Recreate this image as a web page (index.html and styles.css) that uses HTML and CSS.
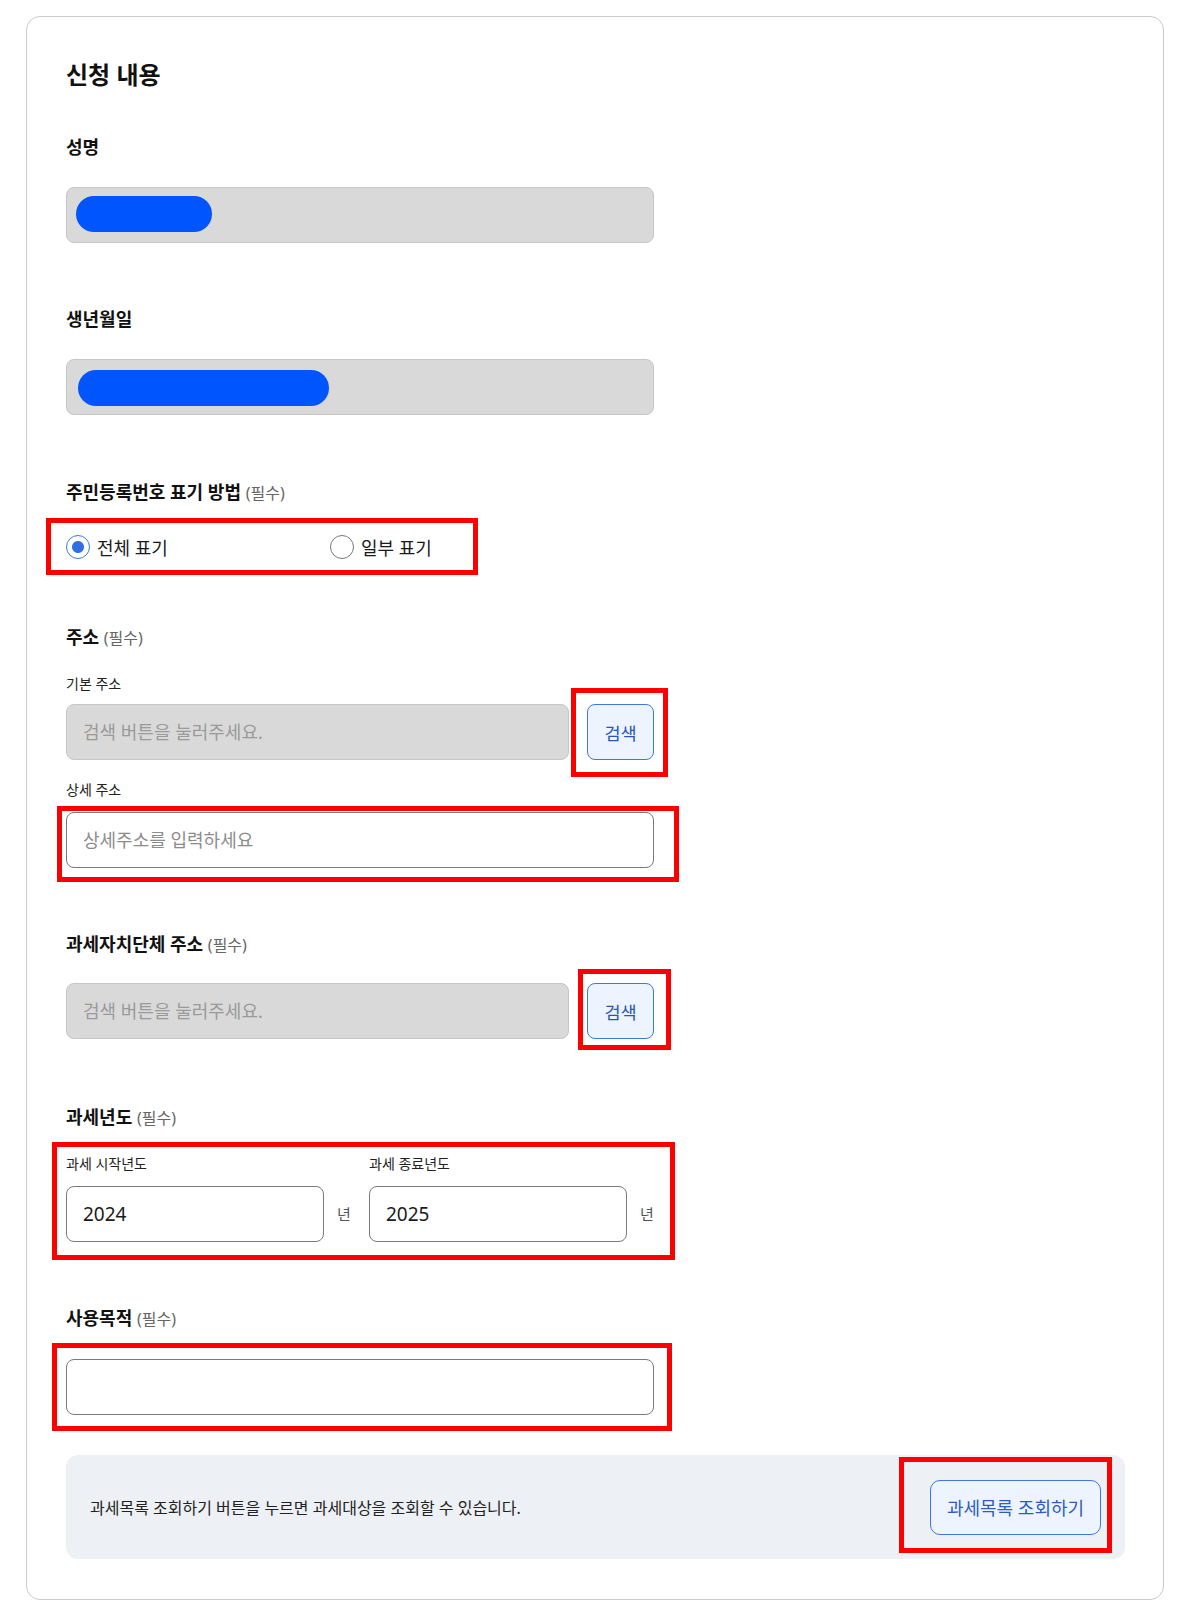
FILE: index.html
```html
<!DOCTYPE html>
<html lang="ko">
<head>
    <meta http-equiv="Content-Type" content="text/html; charset=UTF-8">
    <meta name="viewport" content="width=device-width, initial-scale=1.0">
    <title>신청 내용</title>
    <link rel="stylesheet" href="styles.css">
</head>
<body>
    <div class="card">
        <h2 class="title">신청 내용</h2>

        <div class="label first">성명</div>
        <div class="field locked"><span class="mask mask-name"></span></div>

        <div class="label">생년월일</div>
        <div class="field locked"><span class="mask mask-birth"></span></div>

        <div class="label rrn">주민등록번호 표기 방법 <span class="req">(필수)</span></div>
        <div class="radios marked mark-radio">
            <label class="option"><input type="radio" name="show" checked> 전체 표기</label>
            <label class="option"><input type="radio" name="show"> 일부 표기</label>
        </div>

        <div class="label addr">주소 <span class="req">(필수)</span></div>
        <div class="sublabel">기본 주소</div>
        <div class="search-row">
            <input class="field locked" type="text" placeholder="검색 버튼을 눌러주세요." readonly>
            <button class="btn-search marked mark-s1">검색</button>
        </div>
        <div class="sublabel detail">상세 주소</div>
        <div class="marked mark-detail">
            <input class="field detail-input" type="text" placeholder="상세주소를 입력하세요">
        </div>

        <div class="label">과세자치단체 주소 <span class="req">(필수)</span></div>
        <div class="search-row gov">
            <input class="field locked" type="text" placeholder="검색 버튼을 눌러주세요." readonly>
            <button class="btn-search marked mark-s2">검색</button>
        </div>

        <div class="label year-label">과세년도 <span class="req">(필수)</span></div>
        <div class="years marked mark-years">
            <div class="year-col">
                <div class="sublabel">과세 시작년도</div>
                <div class="year-row">
                    <input class="field year" type="text" value="2024">
                    <span class="unit">년</span>
                </div>
            </div>
            <div class="year-col">
                <div class="sublabel">과세 종료년도</div>
                <div class="year-row">
                    <input class="field year" type="text" value="2025">
                    <span class="unit">년</span>
                </div>
            </div>
        </div>

        <div class="label">사용목적 <span class="req">(필수)</span></div>
        <div class="marked mark-purpose purpose">
            <input class="field" type="text">
        </div>

        <div class="notice">
            <p>과세목록 조회하기 버튼을 누르면 과세대상을 조회할 수 있습니다.</p>
            <button class="btn-list marked mark-list">과세목록 조회하기</button>
        </div>
    </div>
</body>
</html>
```

FILE: styles.css
```css
* {
    box-sizing: border-box;
}

body {
    margin: 0;
    background-color: #ffffff;
    font-family: "Noto Sans", "Noto Sans CJK KR", sans-serif;
    color: #1a1a1a;
}

.card {
    width: 1138px;
    margin: 16px 0 10px 26px;
    padding: 43px 38px 40px 39px;
    border: 1px solid #cacaca;
    border-radius: 14px;
}

.title {
    margin: 0;
    font-size: 24px;
    line-height: 30px;
    font-weight: 700;
    color: #111;
}

.label {
    height: 24px;
    margin-top: 64px;
    font-size: 18px;
    line-height: 24px;
    font-weight: 700;
    color: #111;
}

.label.first {
    margin-top: 45px;
}

.label.rrn {
    margin-top: 65px;
}

.label.addr {
    margin-top: 55px;
}

.label.year-label {
    margin-top: 66px;
}

.req {
    font-size: 16px;
    line-height: 1;
    font-weight: 400;
    color: #666;
}

.sublabel {
    height: 20px;
    margin-top: 25px;
    font-size: 14px;
    line-height: 20px;
    color: #222;
}

.sublabel.detail {
    margin-top: 20px;
}

.field {
    display: block;
    width: 588px;
    height: 56px;
    margin-top: 28px;
    padding: 0 16px;
    border: 1px solid #7a7a7a;
    border-radius: 8px;
    background-color: #fff;
    font-family: "Noto Sans", "Noto Sans CJK KR", sans-serif;
    font-size: 18px;
    color: #222;
    outline: none;
}

.field::placeholder {
    color: #8c8c8c;
}

.field.locked {
    background-color: #d9d9d9;
    border-color: #c6c6c6;
    position: relative;
}

.field.locked::placeholder {
    color: #9a9a9a;
}

.mask {
    position: absolute;
    top: 8px;
    height: 36px;
    border-radius: 18px;
    background-color: #0055ff;
}

.mask-name {
    left: 9px;
    width: 136px;
}

.mask-birth {
    left: 11px;
    top: 10px;
    width: 251px;
}

/* red annotation frames */
.marked {
    position: relative;
}

.marked::after {
    content: "";
    position: absolute;
    border: 5px solid #ff0000;
    pointer-events: none;
}

.mark-radio::after { top: -5px; left: -20px; right: 0; bottom: -5px; }
.mark-s1::after { top: -17px; left: -17px; right: -15px; bottom: -18px; }
.mark-detail::after { top: -6px; left: -9px; right: -25px; bottom: -14px; }
.mark-s2::after { top: -15px; left: -10px; right: -18px; bottom: -12px; }
.mark-years::after { top: -12px; left: -14px; right: -3px; bottom: -18px; }
.mark-purpose::after { top: -16px; left: -14px; right: -18px; bottom: -16px; }
.mark-list::after { top: -24px; left: -32px; right: -12px; bottom: -19px; }

.radios {
    display: flex;
    align-items: center;
    width: 412px;
    height: 47px;
    margin-top: 19px;
}

.option {
    flex: none;
    display: flex;
    align-items: center;
    gap: 7px;
    width: 264px;
    font-size: 18px;
    color: #1a1a1a;
}

.option input {
    appearance: none;
    width: 24px;
    height: 24px;
    margin: 0;
    border: 1.5px solid #777;
    border-radius: 50%;
    background-color: #fff;
}

.option input:checked {
    border-color: #3a78e6;
    background: radial-gradient(circle, #2f6fe4 0 5.5px, #fff 6.5px);
}

.search-row {
    display: flex;
    gap: 18px;
    margin-top: 10px;
}

.search-row.gov {
    margin-top: 27px;
}

.search-row .field {
    width: 503px;
    margin-top: 0;
}

.btn-search {
    flex: none;
    width: 67px;
    height: 56px;
    border: 1px solid #3a78e6;
    border-radius: 8px;
    background-color: #eef4ff;
    font-family: "Noto Sans", "Noto Sans CJK KR", sans-serif;
    font-size: 17.5px;
    color: #2556b8;
}

.mark-detail {
    width: 588px;
    margin-top: 12px;
}

.mark-detail .field {
    margin-top: 0;
}

.years {
    display: flex;
    width: 606px;
    margin-top: 25px;
}

.year-col {
    width: 303px;
}

.year-col .sublabel {
    margin-top: 0;
}

.year-row {
    display: flex;
    align-items: center;
    gap: 13px;
    margin-top: 12px;
}

.field.year {
    width: 258px;
    margin-top: 0;
    font-size: 19px;
    color: #1a1a1a;
}

.unit {
    font-size: 15px;
    color: #555;
    margin-top: -2px;
}

.purpose {
    width: 588px;
    margin-top: 29px;
}

.purpose .field {
    margin-top: 0;
}

.notice {
    display: flex;
    align-items: center;
    justify-content: space-between;
    height: 104px;
    margin-top: 40px;
    padding: 0 24px;
    border-radius: 12px;
    background-color: #edf0f4;
}

.notice p {
    margin: 0;
    font-size: 16px;
    color: #222;
}

.btn-list {
    flex: none;
    width: 171px;
    height: 55px;
    border: 1px solid #3a78e6;
    border-radius: 10px;
    background-color: #eef4ff;
    font-family: "Noto Sans", "Noto Sans CJK KR", sans-serif;
    font-size: 18px;
    color: #2b5cc0;
}
```
